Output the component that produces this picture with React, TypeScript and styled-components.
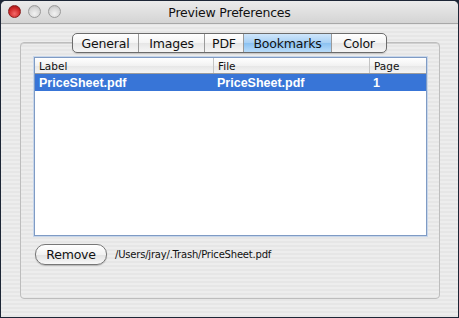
import React from "react";
import styled, { createGlobalStyle } from "styled-components";

const GlobalStyle = createGlobalStyle`
  html, body {
    margin: 0;
    padding: 0;
    background: #1d2636;
  }
  body {
    font-family: "DejaVu Sans", "Liberation Sans", sans-serif;
  }
`;

const pinstripe = `repeating-linear-gradient(
  to bottom,
  #ededed 0px,
  #ededed 2px,
  #e6e6e6 2px,
  #e6e6e6 4px
)`;

const Window = styled.div`
  width: 457px;
  height: 316px;
  border: 1px solid #1d2636;
  border-radius: 6px 6px 0 0;
  overflow: hidden;
  background: ${pinstripe};
  display: flex;
  flex-direction: column;
`;

const TitleBar = styled.div`
  height: 22px;
  flex: none;
  position: relative;
  display: flex;
  align-items: center;
  justify-content: center;
  background: linear-gradient(to bottom, #ebebeb, #d4d4d4);
  border-bottom: 1px solid #a8a8a8;
`;

const Lights = styled.div`
  position: absolute;
  left: 7px;
  top: 4px;
  display: flex;
  gap: 7px;
`;

const Light = styled.div<{ $red?: boolean }>`
  width: 13px;
  height: 13px;
  border-radius: 50%;
  box-sizing: border-box;
  border: 1px solid ${(p) => (p.$red ? "#8a1e1e" : "#9a9a9a")};
  background: ${(p) =>
    p.$red
      ? "radial-gradient(circle at 50% 70%, #f46b6b 0%, #d12a2a 55%, #8e1010 100%)"
      : "radial-gradient(circle at 50% 70%, #f2f2f2 0%, #d6d6d6 60%, #b0b0b0 100%)"};
`;

const Title = styled.div`
  font-size: 12.5px;
  color: #111;
  letter-spacing: -0.2px;
`;

const Body = styled.div`
  flex: 1;
  position: relative;
  padding: 18px 18px 18px 19px;
  display: flex;
  flex-direction: column;
`;

const Tabs = styled.div`
  position: absolute;
  top: 9px;
  left: 71px;
  display: flex;
  height: 18px;
  border: 1px solid #6c6c6c;
  border-radius: 5px;
  overflow: hidden;
  background: linear-gradient(to bottom, #ffffff, #f4f4f4 50%, #e6e6e6 51%, #f6f6f6);
  box-shadow: 0 1px 1px rgba(0, 0, 0, 0.15);
  z-index: 2;
`;

const Tab = styled.div<{ $active?: boolean; $w: number }>`
  width: ${(p) => p.$w}px;
  display: flex;
  align-items: center;
  justify-content: center;
  font-size: 12.5px;
  color: #111;
  letter-spacing: -0.2px;
  border-left: 1px solid #9a9a9a;
  &:first-child {
    border-left: none;
  }
  background: ${(p) =>
    p.$active
      ? "linear-gradient(to bottom, #cfe6fb, #a6cff4 50%, #8ac1f1 51%, #b9dcfa)"
      : "transparent"};
`;

const Group = styled.div`
  flex: 1;
  border: 1px solid #bdbdbd;
  border-radius: 4px;
  background: ${pinstripe};
  box-shadow: inset 0 1px 0 #d0d0d0;
  padding: 14px 12px 14px 13px;
  display: flex;
  flex-direction: column;
`;

const Table = styled.div`
  height: 177px;
  border: 1px solid #7f9bc4;
  box-shadow: 0 0 0 1px #c7d6ea;
  background: #fff;
  display: flex;
  flex-direction: column;
`;

const Row = styled.div<{ $header?: boolean; $selected?: boolean }>`
  display: grid;
  grid-template-columns: 178px 156px 1fr;
  height: ${(p) => (p.$header ? 15 : 17)}px;
  align-items: center;
  font-family: ${(p) => (p.$header ? "inherit" : '"Liberation Sans", sans-serif')};
  font-size: ${(p) => (p.$header ? "10.5px" : "12.5px")};
  font-weight: ${(p) => (p.$header ? "normal" : "bold")};
  color: ${(p) => (p.$selected ? "#fff" : "#111")};
  background: ${(p) =>
    p.$header
      ? "linear-gradient(to bottom, #ffffff, #f2f2f2 50%, #e6e6e6 51%, #f4f4f4)"
      : p.$selected
      ? "#3875d7"
      : "transparent"};
  border-bottom: ${(p) => (p.$header ? "1px solid #9c9c9c" : "none")};
`;

const Cell = styled.div<{ $header?: boolean }>`
  padding-left: 4px;
  height: 100%;
  display: flex;
  align-items: center;
  box-sizing: border-box;
  border-left: ${(p) => (p.$header ? "1px solid #c4c4c4" : "none")};
  &:first-child {
    border-left: none;
  }
  white-space: nowrap;
`;

const Footer = styled.div`
  display: flex;
  align-items: center;
  gap: 8px;
  margin-top: 8px;
  padding-left: 1px;
`;

const Button = styled.button`
  width: 72px;
  height: 21px;
  border: 1px solid #777;
  border-radius: 10px;
  background: linear-gradient(to bottom, #ffffff, #f2f2f2 50%, #e2e2e2 51%, #f8f8f8);
  box-shadow: 0 1px 1px rgba(0, 0, 0, 0.2);
  font-family: inherit;
  font-size: 12.5px;
  color: #111;
  letter-spacing: -0.2px;
  padding: 0;
`;

const Path = styled.span`
  font-size: 10px;
  color: #111;
  letter-spacing: -0.2px;
`;

const tabs = [
  { label: "General", w: 65 },
  { label: "Images", w: 65 },
  { label: "PDF", w: 38 },
  { label: "Bookmarks", w: 87 },
  { label: "Color", w: 54 },
];

export default function App() {
  return (
    <>
      <GlobalStyle />
      <Window>
        <TitleBar>
          <Lights>
            <Light $red />
            <Light />
            <Light />
          </Lights>
          <Title>Preview Preferences</Title>
        </TitleBar>
        <Body>
          <Tabs>
            {tabs.map((t) => (
              <Tab key={t.label} $w={t.w} $active={t.label === "Bookmarks"}>
                {t.label}
              </Tab>
            ))}
          </Tabs>
          <Group>
            <Table>
              <Row $header>
                <Cell $header>Label</Cell>
                <Cell $header>File</Cell>
                <Cell $header>Page</Cell>
              </Row>
              <Row $selected>
                <Cell>PriceSheet.pdf</Cell>
                <Cell>PriceSheet.pdf</Cell>
                <Cell>1</Cell>
              </Row>
            </Table>
            <Footer>
              <Button>Remove</Button>
              <Path>/Users/jray/.Trash/PriceSheet.pdf</Path>
            </Footer>
          </Group>
        </Body>
      </Window>
    </>
  );
}
